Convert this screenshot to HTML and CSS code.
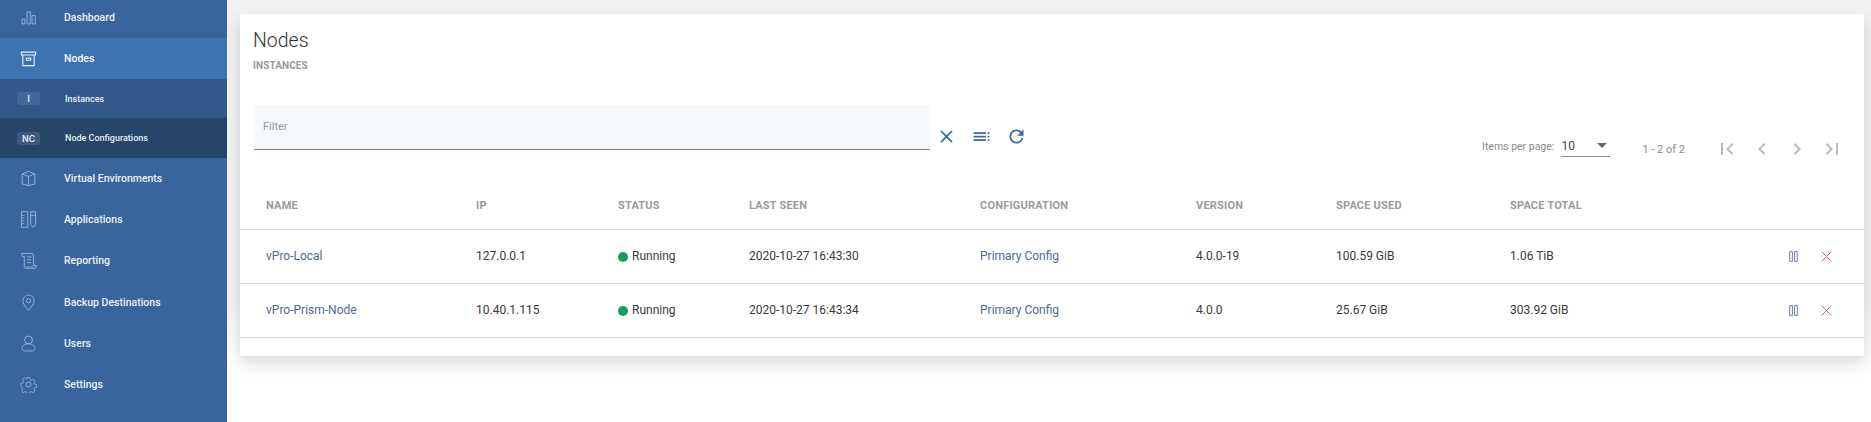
FILE: index.html
```html
<!DOCTYPE html>
<html lang="en">
<head>
<meta charset="utf-8">
<title>Nodes</title>
<link rel="stylesheet" href="styles.css">
</head>
<body>
<div class="app">
  <nav class="sidebar">
    <a class="nav-item first"><svg class="nav-icon" viewBox="0 0 24 24"><path d="M3 14h4v7H3zM10 4h4.500v17H10zM17 9h4.500v12H17z"/></svg><span>Dashboard</span></a>
    <a class="nav-item active"><svg class="nav-icon bright" viewBox="0 0 24 24"><path d="M2 3h20v4H2zM4 7v15h16V7M9 11.500h6v3H9z"/></svg><span>Nodes</span></a>
    <a class="sub-item"><b class="badge">I</b><span>Instances</span></a>
    <a class="sub-item current"><b class="badge">NC</b><span>Node Configurations</span></a>
    <a class="nav-item"><svg class="nav-icon" viewBox="0 0 24 24"><path d="M12 2l9 3.500v14L12 22l-9-2.500v-14zM3 5.500L12 9l9-3.500M12 9v13"/></svg><span>Virtual Environments</span></a>
    <a class="nav-item"><svg class="nav-icon" viewBox="0 0 24 24"><path d="M2 1h9v22H2zM2 6h4M2 10h4M2 14h4M2 18h4M15 1h7v18l-3.500 4-3.500-4zM15 6h7"/></svg><span>Applications</span></a>
    <a class="nav-item"><svg class="nav-icon" viewBox="0 0 24 24"><path d="M2 2h15c1 0 2 1 2 2v15h4v2c0 1-1 2-2 2H8c-1 0-2-1-2-2V6H3zM10 7h6M10 11h6M10 15h6M8 21h11"/></svg><span>Reporting</span></a>
    <a class="nav-item"><svg class="nav-icon" viewBox="0 0 24 24"><path d="M12 23C7 17 4 13.500 4 9.500a8 8 0 0 1 16 0c0 4-3 7.500-8 13.500z"/><circle cx="12" cy="9.500" r="3"/></svg><span>Backup Destinations</span></a>
    <a class="nav-item"><svg class="nav-icon" viewBox="0 0 24 24"><circle cx="12" cy="7" r="5.500"/><path d="M12 12.500c-6 0-9 3-9 6.500 0 2.500 2 3.500 4 3.500h10c2 0 4-1 4-3.500 0-3.500-3-6.500-9-6.500z"/></svg><span>Users</span></a>
    <a class="nav-item"><svg class="nav-icon" viewBox="0 0 24 24"><circle cx="12" cy="12" r="3.500"/><path d="M10 1h4l.7 3.400 2.300 1 3-1.900 2.800 2.800-1.900 3 1 2.300 3 .7v4l-3.400.7-1 2.300 1.900 3-2.800 2.800-3-1.900-2.300 1-.7 3.400h-4l-.7-3.400-2.300-1-3 1.900-2.800-2.800 1.900-3-1-2.300L0 14v-4l3.400-.7 1-2.300-1.900-3 2.800-2.800 3 1.900 2.300-1z" transform="translate(1.400 1.400) scale(.88)"/></svg><span>Settings</span></a>
  </nav>
  <main class="main">
    <section class="card">
      <header class="card-head">
        <h1>Nodes</h1>
        <h2>INSTANCES</h2>
      </header>
      <div class="toolbar">
        <div class="filter-group">
          <div class="filter">Filter</div>
          <div class="tools">
            <svg class="tool" viewBox="0 0 24 24"><path d="M19 6.410 17.590 5 12 10.590 6.410 5 5 6.410 10.590 12 5 17.590 6.410 19 12 13.410 17.590 19 19 17.590 13.410 12z"/></svg>
            <svg class="tool" viewBox="0 0 24 24"><path d="M3 7h14v2H3zM3 11h14v2H3zM3 15h14v2H3zM19 7h2v2h-2zM19 11h2v2h-2zM19 15h2v2h-2z"/></svg>
            <svg class="tool" viewBox="0 0 24 24"><path d="M17.650 6.350A7.958 7.958 0 0 0 12 4c-4.420 0-7.990 3.580-7.990 8s3.570 8 7.990 8c3.730 0 6.840-2.550 7.730-6h-2.080A5.990 5.990 0 0 1 12 18c-3.310 0-6-2.690-6-6s2.690-6 6-6c1.660 0 3.140.69 4.220 1.780L13 11h7V4z"/></svg>
          </div>
        </div>
        <div class="paginator">
          <span class="per-page">Items per page:</span>
          <div class="select"><span>10</span><i class="caret"></i></div>
          <span class="range">1 - 2 of 2</span>
          <div class="pager">
            <svg viewBox="0 0 24 24"><path d="M18.410 16.590 13.820 12l4.590-4.590L17 6l-6 6 6 6zM6 6h2v12H6z"/></svg>
            <svg viewBox="0 0 24 24"><path d="M15.410 7.410 14 6l-6 6 6 6 1.410-1.410L10.830 12z"/></svg>
            <svg viewBox="0 0 24 24"><path d="M10 6 8.590 7.410 13.170 12l-4.580 4.590L10 18l6-6z"/></svg>
            <svg viewBox="0 0 24 24"><path d="M5.590 7.410 10.180 12l-4.590 4.590L7 18l6-6-6-6zM16 6h2v12h-2z"/></svg>
          </div>
        </div>
      </div>
      <table class="grid">
        <colgroup>
          <col class="c-name"><col class="c-ip"><col class="c-status"><col class="c-seen"><col class="c-conf"><col class="c-ver"><col class="c-used"><col class="c-total"><col>
        </colgroup>
        <thead>
          <tr><th>NAME</th><th>IP</th><th>STATUS</th><th>LAST SEEN</th><th>CONFIGURATION</th><th>VERSION</th><th>SPACE USED</th><th>SPACE TOTAL</th><th></th></tr>
        </thead>
        <tbody>
          <tr>
            <td class="link">vPro-Local</td><td>127.0.0.1</td><td><i class="dot"></i>Running</td><td>2020-10-27 16:43:30</td><td class="link">Primary Config</td><td>4.0.0-19</td><td>100.59 GiB</td><td>1.06 TiB</td>
            <td class="actions"><svg class="act pause" viewBox="0 0 24 24"><path d="M5 3h5v18H5zM14 3h5v18h-5z"/></svg><svg class="act stop" viewBox="0 0 24 24"><path d="M3 3l18 18M21 3L3 21"/></svg></td>
          </tr>
          <tr>
            <td class="link">vPro-Prism-Node</td><td>10.40.1.115</td><td><i class="dot"></i>Running</td><td>2020-10-27 16:43:34</td><td class="link">Primary Config</td><td>4.0.0</td><td>25.67 GiB</td><td>303.92 GiB</td>
            <td class="actions"><svg class="act pause" viewBox="0 0 24 24"><path d="M5 3h5v18H5zM14 3h5v18h-5z"/></svg><svg class="act stop" viewBox="0 0 24 24"><path d="M3 3l18 18M21 3L3 21"/></svg></td>
          </tr>
        </tbody>
      </table>
    </section>
  </main>
</div>
</body>
</html>
```

FILE: styles.css
```css
* { box-sizing: border-box; }
html, body { margin: 0; height: 100%; overflow: hidden; background: #fff; }
body { font-family: Roboto, "Liberation Sans", sans-serif; color: #333; }
.app { display: flex; height: 422px; }

.sidebar { width: 227px; flex: none; background: #38669c; display: flex; flex-direction: column; }
.nav-item { height: 41.200px; flex: none; display: flex; align-items: center; color: #e9f1f8; font-size: 10.500px; font-weight: 500; }
.nav-item.first { height: 38px; padding-bottom: 3px; }
.nav-item.active { height: 41px; background: #3e73b2; color: #f5f8fc; }
.nav-icon { width: 17px; height: 17px; margin-left: 20px; margin-right: 27px; fill: none; stroke: #9ab6dc; stroke-width: 1.300; flex: none; }
.nav-icon.bright { stroke: #e2ecf7; stroke-width: 1.600; }
.sub-item { height: 39px; flex: none; display: flex; align-items: center; background: #315a8a; color: #e4edf6; font-size: 9px; font-weight: 500; }
.sub-item.current { background: #274469; height: 40px; }
.badge { width: 23px; height: 13px; margin-left: 17px; margin-right: 25px; border-radius: 3px; background: #43699a; color: #e4edf6; font-size: 9.500px; font-weight: 500; line-height: 13px; text-align: center; flex: none; }
.current .badge { background: #40587d; }

.main { flex: 1; min-width: 0; height: 100%; padding: 14px 7px 0 13px; background: linear-gradient(#f2f2f2 0, #f2f2f2 300px, #fff 360px); }
.card { height: 342px; background: #fff; border-radius: 2px; padding-top: 15px; box-shadow: 0 7px 16px rgba(0,0,0,.15); }
.card-head { padding-left: 13px; }
h1 { margin: 0; font-size: 19.500px; font-weight: 300; line-height: 24px; color: #333; }
h2 { margin: 6px 0 0; font-size: 10px; font-weight: 700; line-height: 14px; color: #9a9a9a; letter-spacing: .1px; }

.toolbar { display: flex; justify-content: space-between; margin-top: 32px; padding-left: 14px; height: 56px; }
.filter-group { display: flex; align-items: flex-start; }
.filter { width: 676px; height: 45px; padding: 0 9px; background: #f5f8fb; border-bottom: 1px solid #7f8590; color: #999; font-size: 11px; line-height: 44px; }
.tools { display: flex; gap: 14px; padding: 21px 0 0 6px; }
.tool { width: 21px; height: 21px; fill: #3a689f; }
.paginator { display: flex; align-items: flex-start; padding-right: 20px; padding-top: 34px; }
.per-page { margin-top: 1px; font-size: 10.500px; color: #8a8a8a; line-height: 14px; }
.select { width: 49px; height: 18px; margin-left: 7px; border-bottom: 1px solid #8f8f8f; display: flex; justify-content: space-between; align-items: flex-start; font-size: 12px; line-height: 14px; color: #444; padding-right: 3px; }
.caret { width: 0; height: 0; margin-top: 4px; border-left: 5px solid transparent; border-right: 5px solid transparent; border-top: 5px solid #666; }
.range { margin-left: 32px; margin-top: 4px; font-size: 11px; line-height: 14px; color: #8a8a8a; }
.pager { display: flex; gap: 11px; margin-left: 30px; margin-top: -2px; }
.pager svg { width: 24px; height: 24px; fill: #bdbdbd; }

.grid { width: 100%; table-layout: fixed; border-collapse: collapse; }
.c-name { width: 236px; }
.c-ip { width: 142px; }
.c-status { width: 131px; }
.c-seen { width: 231px; }
.c-conf { width: 216px; }
.c-ver { width: 140px; }
.c-used { width: 174px; }
.c-total { width: 260px; }
.grid th { height: 68px; padding: 21px 0 0 26px; text-align: left; font-size: 11px; font-weight: 700; color: #9c9a9a; letter-spacing: .2px; border-bottom: 1px solid #dedede; }
.grid td { height: 54px; padding: 0 0 0 26px; font-size: 12px; color: #3a3a3a; border-bottom: 1px solid #dedede; }
.grid th + th, .grid td + td { padding-left: 0; }
.grid td.link { color: #51698f; }
.dot { display: inline-block; width: 10px; height: 10px; border-radius: 50%; background: #13a05c; margin-right: 4px; vertical-align: -2px; }
.grid td.actions { padding-right: 31px; text-align: right; white-space: nowrap; }
.act { width: 13px; height: 13px; fill: none; vertical-align: middle; }
.pause { stroke: #6e78ad; stroke-width: 1.800; margin-right: 20px; }
.stop { stroke: #bd5f74; stroke-width: 1.700; }
```
